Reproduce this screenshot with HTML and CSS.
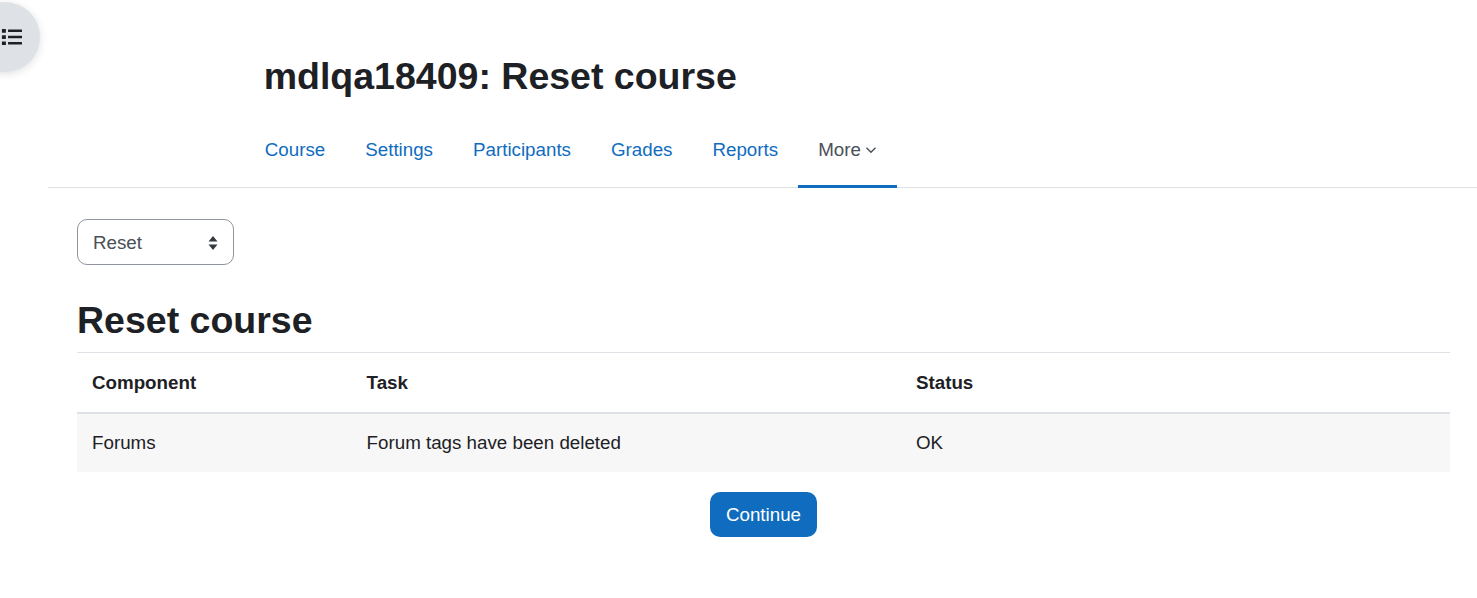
FILE: index.html
```html
<!DOCTYPE html>
<html lang="en">
<head>
<meta charset="utf-8">
<title>mdlqa18409: Reset course</title>
<link rel="stylesheet" href="styles.css">
</head>
<body>
<button class="drawer-toggle" aria-label="Open course index">
  <svg class="drawer-icon" viewBox="0 0 22 16" width="22" height="16" aria-hidden="true"><path fill="#1d2125" d="M1.300 0h3.200q.4 0 .4.400v3q0 .4-.4.400H1.300q-.4 0-.4-.4v-3q0-.4.400-.4zm0 6.200h3.200q.4 0 .4.400v3q0 .4-.4.400H1.300q-.4 0-.4-.4v-3q0-.4.400-.4zm0 6.200h3.200q.4 0 .4.400v3q0 .4-.4.400H1.300q-.4 0-.4-.4v-3q0-.4.400-.4zM7.500.5h13a.5.5 0 0 1 .5.500v1.600a.5.5 0 0 1-.5.500h-13a.5.5 0 0 1-.5-.5V1a.5.5 0 0 1 .5-.5zm0 6.200h13a.5.5 0 0 1 .5.500v1.600a.5.5 0 0 1-.5.500h-13a.5.5 0 0 1-.5-.5V7.200a.5.5 0 0 1 .5-.5zm0 6.200h13a.5.5 0 0 1 .5.500v1.600a.5.5 0 0 1-.5.500h-13a.5.5 0 0 1-.5-.5v-1.600a.5.5 0 0 1 .5-.5z"/></svg>
</button>
<div class="page">
  <header class="page-header">
    <h1 class="page-title">mdlqa18409: Reset course</h1>
    <nav class="tabs">
      <a class="tab" href="#">Course</a>
      <a class="tab" href="#">Settings</a>
      <a class="tab" href="#">Participants</a>
      <a class="tab" href="#">Grades</a>
      <a class="tab" href="#">Reports</a>
      <a class="tab tab-active" href="#">More<svg class="chevron" viewBox="0 0 12 12" width="12" height="12" aria-hidden="true"><path d="M1.500 3.800l4.500 4.500 4.500-4.500" fill="none" stroke="#495057" stroke-width="1.400"/></svg></a>
    </nav>
  </header>
  <main class="content">
    <div class="select-box">
      <span>Reset</span>
      <svg class="updown" viewBox="0 0 12 16" width="12" height="16" aria-hidden="true"><path fill="#343a40" d="M6 1l4.500 5.500h-9zM6 15L1.500 9.500h9z"/></svg>
    </div>
    <h2 class="section-title">Reset course</h2>
    <table class="results">
      <thead>
        <tr><th class="col-a">Component</th><th class="col-b">Task</th><th>Status</th></tr>
      </thead>
      <tbody>
        <tr><td>Forums</td><td>Forum tags have been deleted</td><td>OK</td></tr>
      </tbody>
    </table>
    <div class="actions"><button class="primary">Continue</button></div>
  </main>
</div>
</body>
</html>
```
FILE: styles.css
```css
* { box-sizing: border-box; }
html, body { margin: 0; padding: 0; }
body {
  font-family: "Liberation Sans", Arial, sans-serif;
  font-size: 18.75px;
  line-height: 1.5;
  color: #1d2125;
  background: #fff;
  overflow: hidden;
  height: 598px;
}
.drawer-toggle {
  position: absolute;
  left: -30px;
  top: 2px;
  width: 70px;
  height: 70px;
  padding: 0 0 1px 31px;
  border: 0;
  border-radius: 50%;
  background: #dee2e6;
  box-shadow: 0 2px 8px rgba(0, 0, 0, 0.12);
}
.drawer-icon { display: block; }
.page { padding-left: 48px; }
.page-header { padding-top: 54px; }
.page-title {
  margin: 0 0 0 215.700px;
  font-size: 37.5px;
  font-weight: 700;
  line-height: 1.2;
  height: 52px;
}
.tabs {
  display: flex;
  margin-top: 17px;
  padding-left: 196.800px;
  height: 65px;
  border-bottom: 1px solid #dee2e6;
}
.tab {
  display: block;
  height: 65px;
  padding: 13px 20px 0;
  color: #0f6cbf;
  text-decoration: none;
}
.tab-active {
  color: #495057;
  border-bottom: 3px solid #0f6cbf;
}
.chevron { margin-left: 4px; }
.content { padding: 31px 27px 0 29px; }
.select-box {
  display: flex;
  align-items: center;
  justify-content: space-between;
  width: 157px;
  height: 46px;
  padding: 2px 14px 0 15px;
  border: 1px solid #8f959e;
  border-radius: 10px;
  color: #495057;
}
.section-title {
  margin: 33px 0 9px;
  font-size: 37.5px;
  font-weight: 700;
  line-height: 1.2;
}
.results {
  width: 100%;
  border-collapse: collapse;
  table-layout: fixed;
}
.results th, .results td {
  padding: 15px;
  height: 59px;
  text-align: left;
  font-weight: 400;
  border-top: 1px solid #dee2e6;
}
.results th { height: 60px; padding: 16px 15px 14px; font-weight: 700; border-bottom: 2px solid #dee2e6; }
.results td { background: #f7f7f7; border-top: 0; }
.col-a { width: 274.600px; }
.col-b { width: 549.400px; }
.actions { display: flex; justify-content: center; margin-top: 20px; }
.primary {
  height: 45px;
  width: 107px;
  padding: 2px 0 0;
  border: 0;
  border-radius: 10px;
  background: #0f6cbf;
  color: #fff;
  font: inherit;
}
```
